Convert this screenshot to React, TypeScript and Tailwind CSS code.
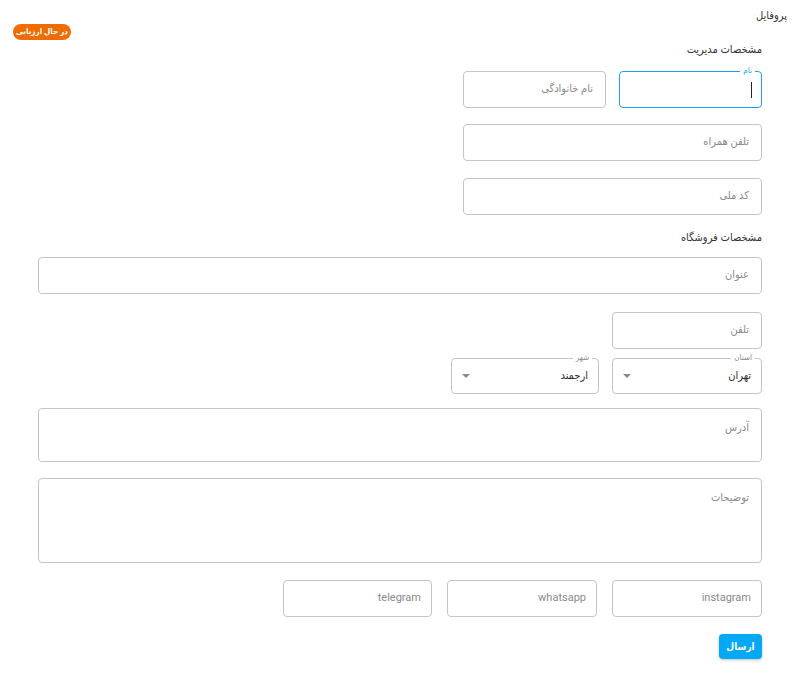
import React from "react";

const FONT = "Roboto, 'DejaVu Sans Condensed', 'DejaVu Sans', 'Noto Sans', sans-serif";

function Field({
  placeholder,
  className = "",
  latin = false,
}: {
  placeholder: string;
  className?: string;
  latin?: boolean;
}) {
  return (
    <div
      className={`h-[37px] rounded-[4px] border border-[#c4c4c4] flex items-center ${latin ? "px-[10px]" : "px-[12px]"} ${className}`}
    >
      <span className="text-[11px] text-[#8a8a8a]">{placeholder}</span>
    </div>
  );
}

function Area({ placeholder, className = "" }: { placeholder: string; className?: string }) {
  return (
    <div className={`rounded-[4px] border border-[#c4c4c4] px-[12px] pt-[5px] ${className}`}>
      <span className="text-[11px] text-[#8a8a8a]">{placeholder}</span>
    </div>
  );
}

function Select({ label, value, className = "" }: { label: string; value: string; className?: string }) {
  return (
    <div
      className={`relative h-[36px] rounded-[4px] border border-[#c4c4c4] flex items-center justify-between pr-[10px] pl-[10px] ${className}`}
    >
      <span className="absolute -top-[7px] right-[6px] bg-white px-[3px] text-[8px] leading-[12px] text-[#8a8a8a]">
        {label}
      </span>
      <span className="text-[11px] text-[#2b2b2b]">{value}</span>
      <svg width="8" height="5" viewBox="0 0 8 5">
        <path d="M0 0 L8 0 L4 4 Z" fill="#8a8a8a" />
      </svg>
    </div>
  );
}

export default function App() {
  return (
    <div dir="rtl" className="w-[795px] min-h-[674px] bg-white" style={{ fontFamily: FONT }}>
      <div className="pt-[8px] pr-[8px] pl-[13px]">
        <div className="text-[11px] leading-[16px] text-[#333]">پروفایل</div>
        <div className="flex justify-end">
          <span className="h-[16px] w-[58px] rounded-full bg-[#ef6c00] text-white text-[8px] font-bold flex items-center justify-center whitespace-nowrap">
            در حال ارزیابی
          </span>
        </div>
      </div>

      <div className="pr-[33px] pl-[38px]">
        <div className="mt-[2px] text-[11px] leading-[16px] text-[#333]">مشخصات مدیریت</div>

        <div className="mt-[13px] w-[299px] flex flex-col">
          <div className="grid grid-cols-2 gap-[13px]">
            <div className="relative h-[37px] rounded-[4px] border-[1.5px] border-[#1ea0f2] flex items-center pr-[9px]">
              <span className="absolute -top-[7px] right-[6px] bg-white px-[3px] text-[8px] leading-[12px] text-[#1ea0f2]">
                نام
              </span>
              <span className="block w-[1px] h-[16px] bg-[#222]" />
            </div>
            <Field placeholder="نام خانوادگی" />
          </div>
          <Field placeholder="تلفن همراه" className="mt-[16px]" />
          <Field placeholder="کد ملی" className="mt-[17px]" />
        </div>

        <div className="mt-[15px] text-[11px] leading-[16px] text-[#333]">مشخصات فروشگاه</div>

        <Field placeholder="عنوان" className="mt-[11px]" />
        <Field placeholder="تلفن" className="mt-[18px] w-[150px]" />

        <div className="mt-[9px] flex gap-[13px]">
          <Select label="استان" value="تهران" className="w-[150px]" />
          <Select label="شهر" value="ارجمند" className="w-[148px]" />
        </div>

        <Area placeholder="آدرس" className="mt-[14px] h-[54px]" />
        <Area placeholder="توضیحات" className="mt-[16px] h-[85px]" />

        <div className="mt-[17px] flex gap-[15px]">
          <Field placeholder="instagram" className="w-[150px]" latin />
          <Field placeholder="whatsapp" className="w-[150px]" latin />
          <Field placeholder="telegram" className="w-[149px]" latin />
        </div>

        <div className="mt-[17px] flex">
          <button className="h-[25px] w-[43px] rounded-[4px] bg-[#03a9f4] text-white text-[10px] font-bold shadow-[0_1px_3px_rgba(0,0,0,0.25)]">
            ارسال
          </button>
        </div>
      </div>
    </div>
  );
}
